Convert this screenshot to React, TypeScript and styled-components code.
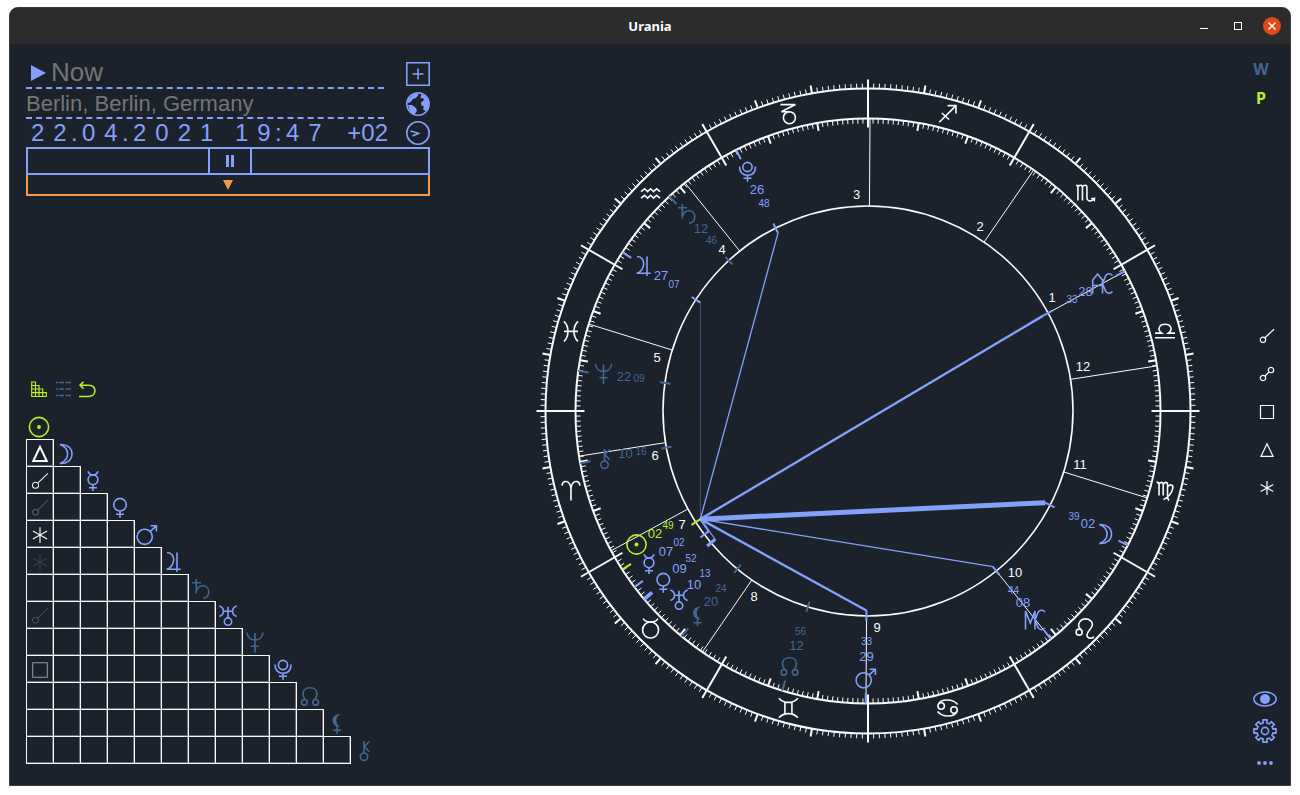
import React from "react";
import styled, { createGlobalStyle } from "styled-components";

const color = {
  bg: "#1b222b",
  bar: "#2c2c2c",
  edge: "#3a3a3a",
  blue: "#83a0fb",
  dim: "#436692",
  lime: "#b5f02a",
  white: "#f8fcff",
  muted: "#757575",
  orange: "#f49b4b",
};

const sans = `"Liberation Sans", Arial, sans-serif`;
const uiSans = `"Noto Sans", "Open Sans", sans-serif`;

const GlobalStyle = createGlobalStyle`
  *, *::before, *::after { box-sizing: border-box; }
  body { margin: 0; background: #fff; font-family: ${sans}; }
`;

/* ---------- Glyphs: drawn around (0, 0) in a 24 unit box ---------- */

type Shape = { d?: string; fill?: string; circles?: number[][]; dots?: number[][] };

const GLYPHS: Record<string, Shape> = {
  sun: { circles: [[0, 0, 9.6]], dots: [[0, 0, 1.9]] },
  moon: { d: "M-6-9.5C1-10 6-6 6 0S1 10-6 9.5C-1 7.5 1.6 4 1.6 0S-1-7.5-6-9.5Z" },
  mercury: { circles: [[0, -1.2, 4.9]], d: "M-5-9.8C-4.2-7.2-2.5-6.1 0-6.1S4.2-7.2 5-9.8M0 3.7V10M-4 6.8H4" },
  venus: { circles: [[0, -3.3, 6.3]], d: "M0 3V9.8M-4 6.3H4" },
  mars: { circles: [[-2.3, 1.8, 7.6]], d: "M3.2-3.6L9.4-9.2M3.5-9.2H9.4V-3.5" },
  jupiter: { d: "M-7-9.5C-2-9.5-.2-5.5-.3-2C-.5 2-3.5 7-7.5 7.2H6.7M3-9.5V10" },
  saturn: { d: "M-4.7-10V4.5M-9-6.3H0M-4.7 2.5C-3.5-1.8-.5-3.3 2-3.3C6-3.3 7.8 0 7.8 3C7.8 7 5 9.3 2 9" },
  uranus: {
    circles: [[0, 5.6, 3.7]],
    d: "M0-9.3V2M-4.5-4.7H4.5M-8.7-10C-5.5-9-4.5-7-4.5-4.7S-5.5-.4-8.7.5M8.7-10C5.5-9 4.5-7 4.5-4.7S5.5-.4 8.7.5",
  },
  neptune: { d: "M-8-10.5C-7.5-5.5-4-3 0-3S7.5-5.5 8-10.5M0-10V9.5M-4 3.3H4" },
  pluto: { circles: [[0, -5, 4.6]], d: "M-8-5.5C-8 .5-4.5 3.2 0 3.2S8 .5 8-5.5M0 3.2V9.7M-4 6.3H4" },
  node: {
    circles: [[-5.6, 5.3, 2.8], [5.6, 5.3, 2.8]],
    d: "M-4.3 3C-6 1.2-7-1-7-3C-7-7-4-9.2 0-9.2S7-7 7-3C7-1 6 1.2 4.3 3",
  },
  lilith: {
    fill: "M3.5-10C-1.5-10.3-4.5-7-4.5-3.5S-1.5 3.3 3.5 2.8C.5 1.5-.7-1-.7-3.5S.5-8.5 3.5-10Z",
    d: "M0 2V9.7M-4 6.3H4",
  },
  chiron: { circles: [[0, 5.7, 3.7]], d: "M0-10V2M5.3-9.5L.3-4.5L5.3.7" },
  ac: { d: "M-9.8 10V-3.5L-4.9-9.5L0-3.5V10M-9.8 2H0M10-8C7.5-10.8 4-10 2.8-7L0 0L2.8 7C4 10 7.5 10.8 10 8" },
  mc: { d: "M-9.5 9.5V-9L-4.7 3L0-9V9.5M10-8C7.5-10.8 4-10 2.8-7L0 0L2.8 7C4 10 7.5 10.8 10 8" },
};

const SIGNS: Shape[] = [
  { d: "M-9-5C-8.5-9.5-3.5-10.5-1.5-7C-.4-5 0-3.5 0-1V10M0-1C0-3.5.4-5 1.5-7C3.5-10.5 8.5-9.5 9-5" },
  { circles: [[0, 1.6, 8]], d: "M-7.5-9.8C-5-6.4-3-6.4 0-6.4S5-6.4 7.5-9.8" },
  { d: "M-9.5-9.8C-6-5.8-3-5.6 0-5.6S6-5.8 9.5-9.8M-9.5 9.8C-6 5.8-3 5.6 0 5.6S6 5.8 9.5 9.8M-3.5-5.6V5.6M3.5-5.6V5.6" },
  { circles: [[-6.4, -2, 3.2], [6.4, 2, 3.2]], d: "M-9.4-3.3C-8-7.5-4-8-.5-8C4-8 8-6 10-3.5M9.4 3.3C8 7.5 4 8 .5 8C-4 8-8 6-10 3.5" },
  { circles: [[-6.3, 3.7, 3]], d: "M-4.5 1.3C-7-1-7.2-4-6-6C-4.5-8.8-2.5-9.6 0-9.6C4-9.6 7-7 7-4C7 0 1.5 2.5 1.5 6.5C1.5 9.8 6 11 8.5 8.5" },
  { d: "M-8.5-8.5C-6.5-8.5-6-7.5-6-6V5M-6-6C-5-9-1.8-9-1.8-6V5M-1.8-6C-.8-9 2.5-9 2.5-6V5C2.5 7 3 9 4 10M2.5-3.5C4.5-7 8.5-6 7.8-2.5C7 2 4 6-1.5 9" },
  { d: "M-10 6.4H10M-10 1.7H-3.3C-6.3-.5-6.4-3-5.5-4.6C-4-8 4-8 5.5-4.6C6.4-3 6.3-.5 3.3 1.7H10" },
  { fill: "M5 4.5L10 4L9.5 8.5Z", d: "M-9.5-8H-6.5M-7.5-8V7M-7.5-6.5C-6-9-3-9-3-6V7M-3-6.5C-1.5-9 1.5-9 1.5-6V4.5C1.5 7.5 4.5 8.2 7.5 6.5" },
  { d: "M-8.3 8.3L8.4-8.4M0-8.4H8.4V-.5M-5.8-1L1.5 5.5" },
  { circles: [[1, 3.7, 6]], d: "M-8-9.4H7L-7-2.3H1" },
  { d: "M-9.5-2L-6-4.8L-3-2L0-4.8L3-2L6-4.8L9.5-2M-9.5 4.5L-6 1.7L-3 4.5L0 1.7L3 4.5L6 1.7L9.5 4.5" },
  { d: "M-7-10C-4-7-3-4-3 0S-4 7-7 10M7-10C4-7 3-4 3 0S4 7 7 10M-7 0H7" },
];

const ASPECTS: Record<string, Shape> = {
  Conjunction: { circles: [[-4, 3.8, 2.7]], d: "M-2 1.8L7-6.8" },
  Opposition: { circles: [[-4, 4, 2.7], [4, -4, 2.7]], d: "M-2 2L2-2" },
  Square: { d: "M-6.5-6.5H6.5V6.5H-6.5Z" },
  Trine: { d: "M0-6.3L6 6.3H-6Z" },
  Sextile: { d: "M0-7V7M-6.3-3.5L6.3 3.5M-6.3 3.5L6.3-3.5" },
};

const Drawn = ({ shape, width = 1.6 }: { shape: Shape; width?: number }) => (
  <g fill="none" stroke="currentColor" strokeWidth={width}>
    {shape.circles?.map(([x, y, r], i) => <circle key={i} cx={x} cy={y} r={r} />)}
    {shape.dots?.map(([x, y, r], i) => <circle key={i} cx={x} cy={y} r={r} fill="currentColor" stroke="none" />)}
    {shape.fill && <path d={shape.fill} fill="currentColor" stroke="none" />}
    {shape.d && <path d={shape.d} />}
  </g>
);

/* ---------- Window frame ---------- */

const Desktop = styled.div`
  height: 100vh;
  min-height: 780px;
  padding: 7px 9px 9px;
`;

const Window = styled.div`
  height: 100%;
  display: flex;
  flex-direction: column;
  overflow: hidden;
  border: 1px solid ${color.edge};
  border-radius: 9px 9px 0 0;
  background: ${color.bg};
  color: ${color.blue};
`;

const TitleBar = styled.header`
  flex: none;
  height: 37px;
  display: grid;
  grid-template-columns: 1fr auto 1fr;
  align-items: center;
  padding: 0 9px;
  background: ${color.bar};
  border-bottom: 1px solid #242424;
`;

const Title = styled.h1`
  grid-column: 2;
  margin: 0;
  color: #fff;
  font: 700 13px/20px ${uiSans};
`;

const WindowControls = styled.div`
  display: flex;
  justify-content: flex-end;
  gap: 16px;
`;

const BareButton = styled.button`
  flex: none;
  display: flex;
  align-items: center;
  justify-content: center;
  padding: 0;
  border: 0;
  background: none;
  color: inherit;
  cursor: pointer;
`;

const ControlButton = styled(BareButton)<{ $close?: boolean }>`
  width: 18px;
  height: 18px;
  border-radius: 50%;
  color: #fff;
  background: ${(p) => (p.$close ? "#e2491a" : "none")};
`;

const Workspace = styled.main`
  flex: 1;
  min-height: 0;
  display: grid;
  grid-template-columns: 404px minmax(0, 1fr) 24px;
  padding: 0 13px 0 16px;
`;

/* ---------- Left column ---------- */

const SidePanel = styled.section`
  display: flex;
  flex-direction: column;
  justify-content: space-between;
  padding: 14px 0 21px;
`;

const EventForm = styled.form`
  display: flex;
  flex-direction: column;
`;

const FormRow = styled.div<{ $short?: boolean }>`
  display: flex;
  align-items: center;
  justify-content: space-between;
  height: ${(p) => (p.$short ? 28 : 30)}px;
`;

const Field = styled.label<{ $indent?: boolean }>`
  display: flex;
  align-items: center;
  width: 358px;
  height: 100%;
  gap: 5px;
  padding-left: ${(p) => (p.$indent ? 5 : 0)}px;
  border-bottom: 2px dashed ${color.blue};
`;

const TextInput = styled.input<{ $large?: boolean }>`
  flex: 1;
  min-width: 0;
  height: 28px;
  padding: ${(p) => (p.$large ? "0 0 2px" : "2px 0 0")};
  border: 0;
  outline: 0;
  background: none;
  color: ${color.muted};
  font: ${(p) => (p.$large ? 26 : 22)}px/26px ${sans};
`;

const DateRow = styled.div`
  display: flex;
  align-items: center;
  width: 362px;
  color: ${color.blue};
  font: 24px/28px ${sans};
`;

const Digits = styled.input<{ $count: number }>`
  width: ${(p) => (p.$count === 4 ? 95 : 50)}px;
  height: 28px;
  margin-right: -5px;
  padding: 0 0 0 5px;
  border: 0;
  outline: 0;
  background: none;
  color: inherit;
  font: inherit;
  letter-spacing: 9px;
`;

const Separator = styled.span`
  width: 6px;
`;

const TimePart = styled.span`
  display: flex;
  margin-left: 12px;
`;

const Offset = styled.span`
  margin-left: auto;
`;

const IconButton = styled(BareButton)`
  width: 24px;
  height: 24px;
`;

const Stepper = styled.div`
  display: grid;
  grid-template-columns: 45fr 44px 44fr;
  height: 28px;
  border: 2px solid ${color.blue};
`;

const StepButton = styled(BareButton)<{ $middle?: boolean }>`
  border: solid ${color.blue};
  border-width: ${(p) => (p.$middle ? "0 2px" : "0")};
`;

const Slider = styled(BareButton)`
  height: 21px;
  border: 2px solid ${color.orange};
  border-top: 0;
  color: ${color.orange};
`;

const ViewTabs = styled.nav`
  display: flex;
  gap: 7px;
  padding-left: 5px;
  margin-bottom: 15px;
`;

const TabButton = styled(BareButton)<{ $tone: string }>`
  width: 17px;
  height: 17px;
  color: ${(p) => p.$tone};
`;

const AspectTable = styled.table`
  width: 352px;
  table-layout: fixed;
  border-collapse: collapse;
`;

const AspectCell = styled.td`
  width: 27px;
  height: 27px;
  padding: 1px 0 0;
  border: 1px solid ${color.white};
  box-shadow: inset -1px -1px rgba(255, 255, 255, 0.35);
  color: ${color.white};
`;

const PlanetHead = styled.th<{ $tone: string }>`
  width: 27px;
  height: 27px;
  padding: 2px 2px 0 0;
  color: ${(p) => p.$tone};
`;

const GlyphSvg = styled.svg`
  display: block;
  margin: 0 auto;
  overflow: visible;
`;

/* ---------- Chart ---------- */

const ChartArea = styled.section`
  display: flex;
  min-height: 0;
  padding: 26px 0 34px 53px;
`;

const ChartSvg = styled.svg`
  flex: 1;
  min-width: 0;
  width: 100%;
  height: 100%;
  font-family: ${sans};
`;

/* ---------- Right rail ---------- */

const Rail = styled.aside`
  display: grid;
  grid-template-rows: 1fr auto 1fr;
  margin: 4px 0 10px;
`;

const ModeList = styled.div`
  display: flex;
  flex-direction: column;
  align-items: flex-start;
  gap: 3px;
  padding-top: 7px;
`;

const ModeButton = styled(BareButton)<{ $on?: boolean }>`
  width: 16px;
  height: 26px;
  color: ${(p) => (p.$on ? color.lime : color.dim)};
  font: 700 16px/26px ${uiSans};
`;

const AspectList = styled.div`
  display: flex;
  flex-direction: column;
  gap: 24px;
  padding-left: 7px;
`;

const AspectButton = styled(BareButton)`
  width: 14px;
  height: 14px;
  color: ${color.white};
`;

const ToolList = styled.div`
  display: flex;
  flex-direction: column;
  align-self: end;
  gap: 8px;
`;

/* ---------- Data ---------- */

type Body = {
  id: string;
  lon: number;
  deg: string;
  min: string;
  tone: string;
  glyph: [number, number];
  degAt: [number, number];
  minAt: [number, number];
};

/* Label places are relative to the wheel centre. */
const BODIES: Body[] = [
  { id: "sun", lon: 32.82, deg: "02", min: "49", tone: color.lime, glyph: [-231.5, 133.5], degAt: [-213, 122.5], minAt: [-200, 114] },
  { id: "moon", lon: 152.65, deg: "02", min: "39", tone: color.blue, glyph: [237.5, 123], degAt: [220, 112.5], minAt: [206, 105.5] },
  { id: "mercury", lon: 37.03, deg: "07", min: "02", tone: color.blue, glyph: [-219, 153], degAt: [-202, 140.5], minAt: [-189, 131] },
  { id: "venus", lon: 39.87, deg: "09", min: "52", tone: color.blue, glyph: [-204.7, 172], degAt: [-188.5, 157.5], minAt: [-177, 147.5] },
  { id: "mars", lon: 89.55, deg: "29", min: "33", tone: color.blue, glyph: [-2, 267.5], degAt: [-1.5, 245.5], minAt: [-1.5, 230.5] },
  { id: "jupiter", lon: 327.12, deg: "27", min: "07", tone: color.blue, glyph: [-224, -145], degAt: [-207, -135.5], minAt: [-194, -126.5] },
  { id: "saturn", lon: 312.77, deg: "12", min: "46", tone: color.dim, glyph: [-181, -197], degAt: [-167, -182.5], minAt: [-156.5, -171] },
  { id: "uranus", lon: 40.22, deg: "10", min: "13", tone: color.blue, glyph: [-189, 189], degAt: [-174, 173.5], minAt: [-163, 162] },
  { id: "neptune", lon: 352.15, deg: "22", min: "09", tone: color.dim, glyph: [-264.5, -36.5], degAt: [-244, -34.5], minAt: [-229, -32.5] },
  { id: "pluto", lon: 296.8, deg: "26", min: "48", tone: color.blue, glyph: [-120.5, -239], degAt: [-111, -221.5], minAt: [-104, -207.5] },
  { id: "node", lon: 72.93, deg: "12", min: "56", tone: color.dim, glyph: [-78.5, 256], degAt: [-71.5, 234.5], minAt: [-67.5, 220.5] },
  { id: "lilith", lon: 50.4, deg: "20", min: "24", tone: color.dim, glyph: [-170.5, 205.5], degAt: [-157, 190], minAt: [-147, 177.5] },
  { id: "chiron", lon: 10.27, deg: "10", min: "16", tone: color.dim, glyph: [-263.5, 48], degAt: [-242.5, 42.5], minAt: [-227, 40.5] },
];

const ANGLES: Body[] = [
  { id: "ac", lon: 208.55, deg: "28", min: "33", tone: color.blue, glyph: [234.5, -127.5], degAt: [217.5, -119.5], minAt: [204, -112] },
  { id: "mc", lon: 128.73, deg: "08", min: "44", tone: color.blue, glyph: [167, 209], degAt: [155, 191.5], minAt: [145.5, 179] },
];

const HOUSES: { lon: number; at: [number, number] }[] = [
  { lon: 208.55, at: [184, -113.5] },
  { lon: 235.5, at: [112, -184.5] },
  { lon: 269.6, at: [-11.5, -216.5] },
  { lon: 308.73, at: [-146, -161.5] },
  { lon: 342.7, at: [-211, -54] },
  { lon: 8.88, at: [-213, 44] },
  { lon: 28.55, at: [-186, 113.5] },
  { lon: 55.5, at: [-114, 185.5] },
  { lon: 89.6, at: [9, 216.5] },
  { lon: 128.73, at: [147, 161.5] },
  { lon: 162.7, at: [212, 53.5] },
  { lon: 188.88, at: [215, -44.5] },
];

const SUN_ASPECTS: { lon: number; width: number; opacity: number }[] = [
  { lon: 327.12, width: 1, opacity: 0.35 },
  { lon: 296.8, width: 1.3, opacity: 1 },
  { lon: 208.55, width: 2.4, opacity: 1 },
  { lon: 152.65, width: 5, opacity: 1 },
  { lon: 128.73, width: 1.4, opacity: 1 },
  { lon: 89.55, width: 2.4, opacity: 1 },
  { lon: 37.03, width: 2, opacity: 1 },
  { lon: 40.1, width: 1.2, opacity: 1 },
];

const GRID_ASPECTS: Record<number, { name: string; width: number; opacity: number }> = {
  1: { name: "Trine", width: 1.8, opacity: 1 },
  2: { name: "Conjunction", width: 0.9, opacity: 1 },
  3: { name: "Conjunction", width: 0.8, opacity: 0.35 },
  4: { name: "Sextile", width: 1, opacity: 1 },
  5: { name: "Sextile", width: 0.8, opacity: 0.18 },
  7: { name: "Conjunction", width: 0.8, opacity: 0.25 },
  9: { name: "Square", width: 0.9, opacity: 0.55 },
};

/* Zero degrees of Aries lies on the left; longitude grows counterclockwise. */
const point = (lon: number, r: number) => {
  const a = (lon * Math.PI) / 180;
  return [-r * Math.cos(a), r * Math.sin(a)];
};

const Ray = ({ lon, from, to, ...rest }: { lon: number; from: number; to: number } & React.SVGProps<SVGLineElement>) => {
  const [x1, y1] = point(lon, from);
  const [x2, y2] = point(lon, to);
  return <line x1={x1} y1={y1} x2={x2} y2={y2} {...(rest as object)} />;
};

const Label = ({ at, size, children }: { at: [number, number]; size: number; children: React.ReactNode }) => (
  <text x={at[0]} y={at[1] + size * 0.36} fontSize={size} textAnchor="middle" fill="currentColor">
    {children}
  </text>
);

const R = { edge: 331.5, outer: 322.5, inner: 292.5, house: 205, aspect: 199.5 };

const Wheel = () => {
  const degrees = Array.from({ length: 360 }, (_, i) => i);
  const [sx, sy] = point(32.82, R.aspect);
  return (
    <ChartSvg viewBox="-340 -340 680 680" role="img" aria-label="Natal chart">
      <g stroke={color.white} fill="none">
        {HOUSES.map((h) => (
          <Ray key={h.lon} lon={h.lon} from={R.house} to={R.inner} strokeWidth={1} />
        ))}
        <circle r={R.outer} strokeWidth={2} />
        <circle r={R.inner} strokeWidth={2} />
        <circle r={R.house} strokeWidth={1.6} />
        {degrees.map((d) => {
          if (d % 30 === 0) return <Ray key={d} lon={d} from={283.5} to={R.edge} strokeWidth={2} />;
          const long = d % 10 === 0;
          return (
            <React.Fragment key={d}>
              <Ray lon={d} from={R.outer} to={long ? 330.5 : 327.5} strokeWidth={long ? 2 : 1} />
              <Ray lon={d} from={R.inner} to={long ? 284.5 : 287.5} strokeWidth={long ? 2 : 1} />
            </React.Fragment>
          );
        })}
      </g>
      <g color={color.white}>
        {SIGNS.map((s, i) => {
          const [x, y] = point(i * 30 + 15, 307.5);
          return (
            <g key={i} transform={`translate(${x} ${y})`}>
              <Drawn shape={s} />
            </g>
          );
        })}
        {HOUSES.map((h, i) => (
          <Label key={i} at={h.at} size={13}>
            {i + 1}
          </Label>
        ))}
      </g>
      {SUN_ASPECTS.map((a) => {
        const [x, y] = point(a.lon, R.aspect);
        return <line key={a.lon} x1={sx} y1={sy} x2={x} y2={y} stroke={color.blue} strokeWidth={a.width} opacity={a.opacity} />;
      })}
      {[...BODIES, ...ANGLES].map((b) => (
        <g key={b.id} color={b.tone}>
          <Ray lon={b.lon} from={282} to={R.inner} stroke="currentColor" strokeWidth={2} />
          <Ray lon={b.lon} from={R.aspect} to={210} stroke="currentColor" strokeWidth={2} />
          <g transform={`translate(${b.glyph[0]} ${b.glyph[1]})`}>
            <Drawn shape={GLYPHS[b.id]} />
          </g>
          <Label at={b.degAt} size={13}>
            {b.deg}
          </Label>
          <Label at={b.minAt} size={10}>
            {b.min}
          </Label>
        </g>
      ))}
    </ChartSvg>
  );
};

const Glyph = ({ id }: { id: string }) => (
  <GlyphSvg width="24" height="24" viewBox="-12 -12 24 24" role="img" aria-label={id}>
    <Drawn shape={GLYPHS[id]} />
  </GlyphSvg>
);

const AspectGrid = () => (
  <AspectTable>
    <tbody>
      {BODIES.map((b, row) => (
        <tr key={b.id}>
          {BODIES.slice(0, row).map((c, col) => {
            const hit = col === 0 ? GRID_ASPECTS[row] : undefined;
            return (
              <AspectCell key={c.id}>
                {hit && (
                  <GlyphSvg width="18" height="18" viewBox="-8 -8 16 16" opacity={hit.opacity} role="img" aria-label={hit.name}>
                    <Drawn shape={ASPECTS[hit.name]} width={hit.width} />
                  </GlyphSvg>
                )}
              </AspectCell>
            );
          })}
          <PlanetHead scope="row" $tone={b.tone}>
            <Glyph id={b.id} />
          </PlanetHead>
          {row < BODIES.length - 1 && <td colSpan={BODIES.length - 1 - row} />}
        </tr>
      ))}
    </tbody>
  </AspectTable>
);

const gearPath = (() => {
  const pts: string[] = [];
  for (let i = 0; i < 8; i++) {
    const mid = i * 45;
    [
      [-13, 8.2],
      [-11, 11.3],
      [11, 11.3],
      [13, 8.2],
    ].forEach(([off, r]) => {
      const a = ((mid + off) * Math.PI) / 180;
      pts.push(`${(r * Math.sin(a)).toFixed(2)} ${(-r * Math.cos(a)).toFixed(2)}`);
    });
  }
  return `M${pts.join("L")}Z`;
})();

export default function App() {
  return (
    <>
      <GlobalStyle />
      <Desktop>
        <Window>
          <TitleBar>
            <Title>Urania</Title>
            <WindowControls>
              <ControlButton type="button" aria-label="Minimize">
                <svg width="18" height="18" viewBox="0 0 18 18">
                  <path d="M5 11.5H13" stroke="currentColor" />
                </svg>
              </ControlButton>
              <ControlButton type="button" aria-label="Maximize">
                <svg width="18" height="18" viewBox="0 0 18 18">
                  <rect x="5.5" y="5.5" width="7" height="7" fill="none" stroke="currentColor" />
                </svg>
              </ControlButton>
              <ControlButton type="button" aria-label="Close" $close>
                <svg width="18" height="18" viewBox="0 0 18 18">
                  <path d="M5.5 5.5L12.5 12.5M12.5 5.5L5.5 12.5" stroke="currentColor" strokeWidth="1.3" />
                </svg>
              </ControlButton>
            </WindowControls>
          </TitleBar>

          <Workspace>
            <SidePanel>
              <EventForm>
                <FormRow>
                  <Field $indent>
                    <svg width="15" height="16" viewBox="0 0 15 16" aria-hidden="true">
                      <path d="M0 0L15 8L0 16Z" fill={color.blue} />
                    </svg>
                    <TextInput $large defaultValue="Now" aria-label="Event name" />
                  </Field>
                  <IconButton type="button" aria-label="Add">
                    <svg width="24" height="24" viewBox="0 0 24 24" fill="none" stroke="currentColor" strokeWidth="1.6">
                      <path d="M.8.8H23.2V23.2H.8ZM12 6.5V17.5M6.5 12H17.5" />
                    </svg>
                  </IconButton>
                </FormRow>
                <FormRow>
                  <Field>
                    <TextInput defaultValue="Berlin, Berlin, Germany" aria-label="Place" />
                  </Field>
                  <IconButton type="button" aria-label="Map">
                    <svg width="24" height="24" viewBox="0 0 24 24" fill="none">
                      <circle cx="12" cy="12" r="11.2" stroke="currentColor" strokeWidth="1.5" />
                      <path
                        d="M2 7.5L7 2.5L12 1L12.5 3L10 6L7 7L5 9.5L3 11L1 10ZM2 13L6 13L10 16L11 19L8.5 22.5L4 19.5ZM15 2L20 4.5L23 9L22.5 16L19.5 19L17 17.5L18 14.5L15.5 13.5L15 10.5L18 8L17 6L14.5 6.5Z"
                        fill="currentColor"
                      />
                    </svg>
                  </IconButton>
                </FormRow>
                <FormRow $short>
                  <DateRow>
                    <Digits $count={2} defaultValue="22" aria-label="Day" />
                    <Separator>.</Separator>
                    <Digits $count={2} defaultValue="04" aria-label="Month" />
                    <Separator>.</Separator>
                    <Digits $count={4} defaultValue="2021" aria-label="Year" />
                    <TimePart>
                      <Digits $count={2} defaultValue="19" aria-label="Hour" />
                      <Separator>:</Separator>
                      <Digits $count={2} defaultValue="47" aria-label="Minute" />
                    </TimePart>
                    <Offset>+02</Offset>
                  </DateRow>
                  <IconButton type="button" aria-label="Time">
                    <svg width="24" height="24" viewBox="0 0 24 24" fill="none" stroke="currentColor" strokeWidth="1.6">
                      <circle cx="12" cy="12" r="11.2" />
                      <path d="M4.5 10L12.5 12.3L6.5 15" />
                    </svg>
                  </IconButton>
                </FormRow>
                <Stepper>
                  <StepButton type="button" aria-label="Step back" />
                  <StepButton type="button" aria-label="Pause" $middle>
                    <svg width="8" height="12" viewBox="0 0 8 12">
                      <path d="M0 0H3V12H0ZM5 0H8V12H5Z" fill="currentColor" />
                    </svg>
                  </StepButton>
                  <StepButton type="button" aria-label="Step forward" />
                </Stepper>
                <Slider type="button" aria-label="Time position">
                  <svg width="10" height="10" viewBox="0 0 10 10">
                    <path d="M0 0H10L5 10Z" fill="currentColor" />
                  </svg>
                </Slider>
              </EventForm>

              <div>
                <ViewTabs>
                  <TabButton type="button" aria-label="Aspect grid" $tone={color.lime}>
                    <svg width="17" height="17" viewBox="0 0 17 17" fill="none" stroke="currentColor" strokeWidth="1.2">
                      <path d="M.7 1H4.5V15.5M.7 .5V15.5H15.3V11.7H.7M.7 4.5H8V15.5M.7 8H11.7V15.5" />
                    </svg>
                  </TabButton>
                  <TabButton type="button" aria-label="List" $tone={color.dim}>
                    <svg width="17" height="17" viewBox="0 0 17 17" fill="none" stroke="currentColor" strokeWidth="1.7">
                      <path d="M1 1.5H3M4 1.5H9M10.5 1.5H16M1 8H3M4 8H9M10.5 8H16M1 14.5H3M4 14.5H9M10.5 14.5H16" />
                    </svg>
                  </TabButton>
                  <TabButton type="button" aria-label="Back" $tone={color.lime}>
                    <svg width="17" height="17" viewBox="0 0 17 17" fill="none" stroke="currentColor" strokeWidth="1.6">
                      <path d="M4.5 .8L1 4.2L4.5 7.6M1 4.2H9.5C13.5 4.2 15.9 6.5 15.9 9.8S13.5 15.5 9.5 15.5H0" />
                    </svg>
                  </TabButton>
                </ViewTabs>
                <AspectGrid />
              </div>
            </SidePanel>

            <ChartArea>
              <Wheel />
            </ChartArea>

            <Rail>
              <ModeList>
                <ModeButton type="button">W</ModeButton>
                <ModeButton type="button" $on>
                  P
                </ModeButton>
              </ModeList>
              <AspectList>
                {Object.keys(ASPECTS).map((name) => (
                  <AspectButton key={name} type="button" aria-label={name}>
                    <GlyphSvg width="16" height="16" viewBox="-8 -8 16 16">
                      <Drawn shape={ASPECTS[name]} width={1.2} />
                    </GlyphSvg>
                  </AspectButton>
                ))}
              </AspectList>
              <ToolList>
                <IconButton type="button" aria-label="View">
                  <svg width="24" height="16" viewBox="-12 -8 24 16">
                    <ellipse rx="11.2" ry="7" fill="none" stroke="currentColor" strokeWidth="1.5" />
                    <circle r="5" fill="currentColor" />
                  </svg>
                </IconButton>
                <IconButton type="button" aria-label="Settings">
                  <svg width="24" height="24" viewBox="-12 -12 24 24" fill="none" stroke="currentColor" strokeWidth="1.6">
                    <path d={gearPath} strokeLinejoin="round" />
                    <circle r="3.6" />
                  </svg>
                </IconButton>
                <IconButton type="button" aria-label="More">
                  <svg width="16" height="4" viewBox="0 0 16 4" fill="currentColor">
                    <circle cx="2" cy="2" r="1.9" />
                    <circle cx="8" cy="2" r="1.9" />
                    <circle cx="14" cy="2" r="1.9" />
                  </svg>
                </IconButton>
              </ToolList>
            </Rail>
          </Workspace>
        </Window>
      </Desktop>
    </>
  );
}
